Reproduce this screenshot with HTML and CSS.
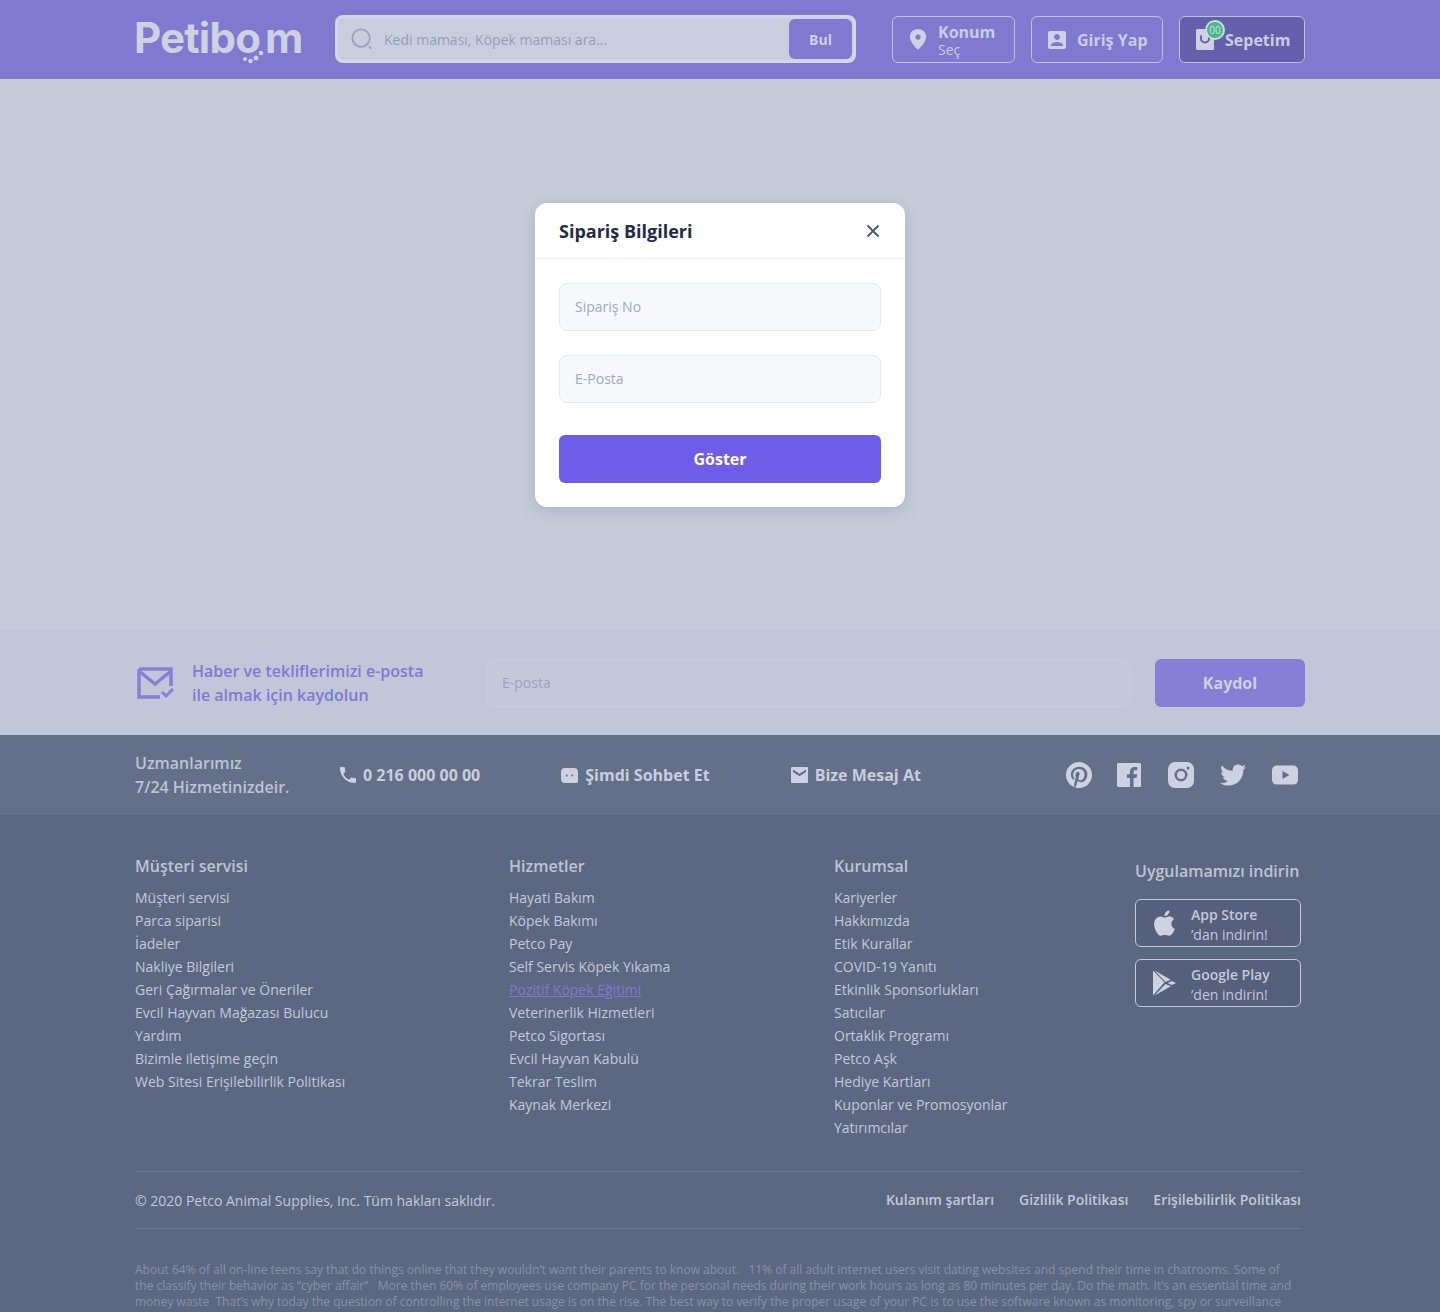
FILE: index.html
```html
<!DOCTYPE html>
<html lang="tr">
<head>
    <meta charset="UTF-8">
    <meta name="viewport" content="width=device-width, initial-scale=1.0">
    <title>Petibom - Sipariş Bilgileri</title>
    <link rel="stylesheet" href="styles.css">
</head>
<body>
    <header class="header">
        <div class="container header-row">
            <a class="logo" href="#">Petib<span class="logo-o">o<svg class="logo-paw" viewBox="0 0 24 14"><circle cx="3" cy="9" r="2"/><circle cx="8.500" cy="11" r="2.300"/><circle cx="14" cy="8" r="2.500"/><circle cx="19" cy="3" r="2.300"/></svg></span><span class="logo-m">m</span></a>
            <form class="search">
                <svg class="search-icon" viewBox="0 0 24 24"><circle cx="11" cy="11" r="9.500"/><path d="M19.500 20l2.500 2.500"/></svg>
                <input class="search-input" type="text" placeholder="Kedi maması, Köpek maması ara...">
                <button class="search-btn" type="button">Bul</button>
            </form>
            <a class="head-btn head-konum" href="#">
                <svg viewBox="4 2 16 20.500"><path d="M12 2C7.600 2 4 5.500 4 9.900 4 15 12 22.500 12 22.500S20 15 20 9.900C20 5.500 16.400 2 12 2zm0 10.400a2.500 2.500 0 1 1 0-5 2.500 2.500 0 0 1 0 5z"/></svg>
                <span class="konum-text"><b>Konum</b><small>Seç</small></span>
            </a>
            <a class="head-btn head-login" href="#">
                <svg viewBox="3 3 18 18"><path d="M3 5v14c0 1.100.89 2 2 2h14c1.100 0 2-.9 2-2V5c0-1.100-.9-2-2-2H5c-1.110 0-2 .9-2 2zm12 4c0 1.660-1.340 3-3 3s-3-1.340-3-3 1.340-3 3-3 3 1.340 3 3zm-9 8c0-2 4-3.100 6-3.100s6 1.100 6 3.100v1H6v-1z"/></svg>
                <b>Giriş Yap</b>
            </a>
            <a class="head-btn head-cart" href="#">
                <span class="cart-icon">
                    <svg viewBox="0 0 18 21"><path fill-rule="evenodd" d="M1.500 0h15A1.500 1.500 0 0 1 18 1.500v18a1.500 1.500 0 0 1-1.500 1.500h-15A1.500 1.500 0 0 1 0 19.500v-18A1.500 1.500 0 0 1 1.500 0zM4 6.500v3a5 5 0 0 0 10 0v-3h-2v3a3 3 0 0 1-6 0v-3z"/></svg>
                    <span class="cart-badge">00</span>
                </span>
                <b>Sepetim</b>
            </a>
        </div>
    </header>

    <main class="main">
        <div class="modal">
            <div class="modal-head">
                <h2>Sipariş Bilgileri</h2>
                <svg class="modal-close" viewBox="0 0 14 14"><path d="M1.500 1.500l11 11M12.500 1.500l-11 11"/></svg>
            </div>
            <form class="modal-body">
                <input class="modal-input" type="text" placeholder="Sipariş No">
                <input class="modal-input" type="text" placeholder="E-Posta">
                <button class="modal-btn" type="button">Göster</button>
            </form>
        </div>
    </main>

    <section class="newsletter">
        <div class="container newsletter-row">
            <svg class="news-icon" viewBox="0 0 38 34"><path d="M2 2h32v17M2 2v28h21M2 4l16 13L34 4" fill="none"/><path class="news-check" d="M25 25l4 4 7-7" fill="none"/></svg>
            <p class="news-text">Haber ve tekliflerimizi e-posta<br>ile almak için kaydolun</p>
            <input class="news-input" type="text" placeholder="E-posta">
            <button class="news-btn" type="button">Kaydol</button>
        </div>
    </section>

    <section class="contact">
        <div class="container contact-row">
            <p class="contact-text">Uzmanlarımız<br>7/24 Hizmetinizdeir.</p>
            <a class="contact-item contact-phone" href="#">
                <svg class="icon-phone" viewBox="3 3 18 18"><path d="M6.620 10.790c1.440 2.830 3.760 5.140 6.590 6.590l2.200-2.200c.27-.27.67-.36 1.020-.24 1.120.37 2.330.57 3.570.57.55 0 1 .45 1 1V20c0 .55-.45 1-1 1-9.390 0-17-7.610-17-17 0-.55.45-1 1-1h3.500c.55 0 1 .45 1 1 0 1.250.2 2.450.57 3.570.11.35.03.74-.25 1.020l-2.200 2.200z"/></svg>
                0 216 000 00 00
            </a>
            <a class="contact-item" href="#">
                <svg class="icon-chat" viewBox="0 0 17 15"><path fill-rule="evenodd" d="M4 0h9a4 4 0 0 1 4 4v9.500a1.500 1.500 0 0 1-1.500 1.500H4a4 4 0 0 1-4-4V4a4 4 0 0 1 4-4zm1.800 6.500a1 1 0 1 0 0 2 1 1 0 0 0 0-2zm5.400 0a1 1 0 1 0 0 2 1 1 0 0 0 0-2z"/></svg>
                Şimdi Sohbet Et
            </a>
            <a class="contact-item" href="#">
                <svg class="icon-mail" viewBox="0 0 17 16"><path fill-rule="evenodd" d="M1 0h15a1 1 0 0 1 1 1v14a1 1 0 0 1-1 1H1a1 1 0 0 1-1-1V1a1 1 0 0 1 1-1zm1 2.500V5l6.500 4.200L15 5V2.500L8.500 6.700z"/></svg>
                Bize Mesaj At
            </a>
            <div class="social">
                <svg viewBox="2 2 20 20"><path d="M9.040 21.540C10 21.830 10.970 22 12 22A10 10 0 0 0 22 12 10 10 0 0 0 12 2 10 10 0 0 0 2 12c0 4.250 2.670 7.900 6.440 9.340-.09-.78-.18-2.070 0-2.960l1.150-4.940s-.29-.58-.29-1.500c0-1.380.86-2.410 1.840-2.410.86 0 1.260.63 1.260 1.440 0 .86-.57 2.090-.86 3.270-.17.98.52 1.840 1.520 1.840 1.780 0 3.160-1.900 3.160-4.580 0-2.400-1.720-4.040-4.190-4.040-2.820 0-4.480 2.100-4.480 4.310 0 .86.28 1.730.74 2.300.09.06.09.14.06.29l-.29 1.090c0 .17-.11.23-.28.11C6.500 15 5.760 13.180 5.760 11.710c0-3.160 2.240-6.030 6.560-6.030 3.440 0 6.120 2.470 6.120 5.750 0 3.440-2.130 6.200-5.180 6.200-.97 0-1.920-.52-2.260-1.130l-.67 2.370c-.23.86-.86 2.010-1.290 2.700v-.03z"/></svg>
                <svg class="social-fb" viewBox="3 3 18 18"><path d="M4 3h16a1 1 0 0 1 1 1v16a1 1 0 0 1-1 1h-4.600v-6.800h2.300l.4-2.700h-2.700V9.800c0-.8.3-1.300 1.400-1.300h1.400V6.100c-.3 0-1.100-.1-2-.1-2.100 0-3.500 1.300-3.500 3.600v1.900H10.400v2.700h2.300V21H4a1 1 0 0 1-1-1V4a1 1 0 0 1 1-1z"/></svg>
                <svg viewBox="0 0 26 26"><path fill-rule="evenodd" d="M7 0h12a7 7 0 0 1 7 7v12a7 7 0 0 1-7 7H7a7 7 0 0 1-7-7V7a7 7 0 0 1 7-7zm6 6.500a6.500 6.500 0 1 0 0 13 6.500 6.500 0 0 0 0-13zm0 2.500a4 4 0 1 1 0 8 4 4 0 0 1 0-8zm7-4.500a1.500 1.500 0 1 0 0 3 1.500 1.500 0 0 0 0-3z"/></svg>
                <svg viewBox="1.500 4 21 17"><path d="M22.460 6c-.77.35-1.600.58-2.460.69.88-.53 1.560-1.370 1.880-2.380-.83.5-1.750.85-2.720 1.050C18.370 4.500 17.260 4 16 4c-2.350 0-4.270 1.920-4.270 4.290 0 .34.04.67.11.98C8.280 9.090 5.110 7.380 3 4.790c-.37.63-.58 1.370-.58 2.150 0 1.490.75 2.810 1.910 3.560-.71 0-1.370-.2-1.950-.5v.03c0 2.080 1.480 3.820 3.440 4.210-.36.1-.74.15-1.130.15-.27 0-.54-.03-.8-.08.54 1.690 2.110 2.950 4 2.980-1.460 1.160-3.310 1.840-5.330 1.840-.34 0-.68-.02-1.020-.06C3.440 20.290 5.700 21 8.120 21 16 21 20.330 14.460 20.330 8.790c0-.19 0-.37-.01-.56.84-.6 1.560-1.360 2.140-2.230z"/></svg>
                <svg viewBox="0 0 26 26"><path fill-rule="evenodd" d="M5 3.500h16a5 5 0 0 1 5 4.500c.2 3 .2 7 0 10a5 5 0 0 1-5 4.500H5A5 5 0 0 1 0 18c-.2-3-.2-7 0-10a5 5 0 0 1 5-4.500zM10.500 9v8l7-4z"/></svg>
            </div>
        </div>
    </section>

    <footer class="footer">
        <div class="container">
            <div class="footer-cols">
                <div class="footer-col">
                    <h3>Müşteri servisi</h3>
                    <a href="#">Müşteri servisi</a>
                    <a href="#">Parca siparisi</a>
                    <a href="#">İadeler</a>
                    <a href="#">Nakliye Bilgileri</a>
                    <a href="#">Geri Çağırmalar ve Öneriler</a>
                    <a href="#">Evcil Hayvan Mağazası Bulucu</a>
                    <a href="#">Yardım</a>
                    <a href="#">Bizimle iletişime geçin</a>
                    <a href="#">Web Sitesi Erişilebilirlik Politikası</a>
                </div>
                <div class="footer-col">
                    <h3>Hizmetler</h3>
                    <a href="#">Hayati Bakım</a>
                    <a href="#">Köpek Bakımı</a>
                    <a href="#">Petco Pay</a>
                    <a href="#">Self Servis Köpek Yıkama</a>
                    <a class="active" href="#">Pozitif Köpek Eğitimi</a>
                    <a href="#">Veterinerlik Hizmetleri</a>
                    <a href="#">Petco Sigortası</a>
                    <a href="#">Evcil Hayvan Kabulü</a>
                    <a href="#">Tekrar Teslim</a>
                    <a href="#">Kaynak Merkezi</a>
                </div>
                <div class="footer-col">
                    <h3>Kurumsal</h3>
                    <a href="#">Kariyerler</a>
                    <a href="#">Hakkımızda</a>
                    <a href="#">Etik Kurallar</a>
                    <a href="#">COVID-19 Yanıtı</a>
                    <a href="#">Etkinlik Sponsorlukları</a>
                    <a href="#">Satıcılar</a>
                    <a href="#">Ortaklık Programı</a>
                    <a href="#">Petco Aşk</a>
                    <a href="#">Hediye Kartları</a>
                    <a href="#">Kuponlar ve Promosyonlar</a>
                    <a href="#">Yatırımcılar</a>
                </div>
                <div class="footer-app">
                    <h3>Uygulamamızı indirin</h3>
                    <a class="app-btn" href="#">
                        <svg viewBox="3 2 18 20"><path d="M18.710 19.500c-.83 1.240-1.710 2.450-3.050 2.470-1.340.03-1.770-.79-3.290-.79-1.530 0-2 .77-3.270.82-1.310.05-2.300-1.320-3.140-2.530C4.250 17 2.940 12.450 4.700 9.390c.87-1.520 2.430-2.480 4.120-2.510 1.280-.02 2.500.87 3.290.87.78 0 2.260-1.070 3.810-.91.65.03 2.470.26 3.640 1.980-.09.06-2.170 1.280-2.150 3.810.03 3.020 2.650 4.030 2.680 4.040-.03.07-.42 1.440-1.380 2.830M13 3.500c.73-.83 1.940-1.460 2.940-1.500.13 1.170-.34 2.350-1.040 3.190-.69.85-1.830 1.510-2.950 1.420-.15-1.150.41-2.350 1.050-3.110z"/></svg>
                        <span class="app-text"><b>App Store</b>’dan indirin!</span>
                    </a>
                    <a class="app-btn" href="#">
                        <svg viewBox="0 0 22 24"><path d="M0 0l11 11.300L0 24zM1.500 0L17 9 12 11zM1.500 24L17 15l-5-2zM18 10l4 2-4 2-4-2z"/></svg>
                        <span class="app-text"><b>Google Play</b>’den indirin!</span>
                    </a>
                </div>
            </div>
            <div class="footer-bottom">
                <p>© 2020 Petco Animal Supplies, Inc. Tüm hakları saklıdır.</p>
                <nav class="bottom-links">
                    <a href="#">Kulanım şartları</a>
                    <a href="#">Gizlilik Politikası</a>
                    <a href="#">Erişilebilirlik Politikası</a>
                </nav>
            </div>
            <p class="legal">About 64% of all on-line teens say that do things online that they wouldn’t want their parents to know about. &nbsp; 11% of all adult internet users visit dating websites and spend their time in chatrooms. Some of the classify their behavior as “cyber affair” &nbsp; More then 60% of employees use company PC for the personal needs during their work hours as long as 80 minutes per day. Do the math. It’s an essential time and money waste &nbsp;That’s why today the question of controlling the internet usage is on the rise. The best way to verify the proper usage of your PC is to use the software known as monitoring, spy or surveillance</p>
        </div>
    </footer>
</body>
</html>
```

FILE: styles.css
```css
* {
    margin: 0;
    padding: 0;
    box-sizing: border-box;
}

body {
    font-family: 'Open Sans', sans-serif;
    background: #c5cbd9;
    color: #c9cede;
}

a {
    color: inherit;
    text-decoration: none;
}

input,
button {
    font-family: inherit;
    outline: none;
}

.container {
    width: 1170px;
    margin: 0 auto;
}

/* header */
.header {
    background: #7f79d0;
    height: 79px;
    padding-top: 15px;
}

.header-row {
    display: flex;
    align-items: flex-start;
}

.logo {
    width: 200px;
    font-family: 'Inter', sans-serif;
    font-size: 42px;
    font-weight: 700;
    line-height: 46px;
    letter-spacing: -0.8px;
    color: #cdd1e2;
    text-indent: -1px;
}

.logo-o {
    position: relative;
}

.logo-m {
    margin-left: 5px;
}

.logo-paw {
    position: absolute;
    left: 7px;
    bottom: -1px;
    width: 24px;
    height: 14px;
    fill: #cdd1e2;
}

.search {
    width: 521px;
    height: 48px;
    display: flex;
    align-items: center;
    background: #c9cede;
    border: 3px solid #d2d6e5;
    border-radius: 8px;
    padding: 0 1px 0 13px;
}

.search-icon {
    width: 22px;
    height: 22px;
    fill: none;
    stroke: #9aa2b9;
    stroke-width: 2;
    flex-shrink: 0;
}

.search-input {
    flex: 1;
    margin-left: 11px;
    border: none;
    background: transparent;
    font-size: 14px;
    color: #8d95ad;
}

.search-input::placeholder {
    color: #959db5;
    opacity: 1;
}

.search-btn {
    width: 63px;
    height: 40px;
    border: none;
    border-radius: 6px;
    background: #7f79d0;
    color: #cdd1e2;
    font-size: 14px;
    font-weight: 700;
}

.head-btn {
    height: 47px;
    margin-top: 1px;
    display: flex;
    align-items: center;
    border: 1px solid #bfc2df;
    border-radius: 6px;
    color: #c9cde2;
    font-size: 16px;
}

.head-btn svg {
    fill: #cdd1e2;
    flex-shrink: 0;
}

.head-konum {
    width: 123px;
    margin-left: 36px;
    padding-left: 16px;
}

.head-konum svg {
    width: 18px;
    height: 21px;
}

.konum-text {
    margin-left: 11px;
    padding-top: 2px;
    display: flex;
    flex-direction: column;
    line-height: 18px;
}

.konum-text small {
    font-size: 14px;
    line-height: 18px;
}

.head-login {
    width: 132px;
    margin-left: 16px;
    padding-left: 16px;
}

.head-login svg {
    width: 18px;
    height: 18px;
    margin-right: 11px;
}

.head-cart {
    width: 126px;
    margin-left: 16px;
    padding-left: 16px;
    background: #6560ac;
}

.cart-icon {
    position: relative;
    width: 18px;
    height: 21px;
    margin-right: 11px;
}

.cart-icon svg {
    display: block;
    width: 18px;
    height: 21px;
}

.cart-badge {
    position: absolute;
    left: 9px;
    top: -9px;
    width: 20px;
    height: 20px;
    border: 2px solid #c3e2d8;
    border-radius: 50%;
    background: #4fb48d;
    color: #c9e9db;
    font-size: 10px;
    line-height: 16px;
    text-align: center;
}

/* modal */
.main {
    height: 551px;
    display: flex;
    align-items: center;
    justify-content: center;
}

.modal {
    width: 370px;
    height: 304px;
    background: #fff;
    border-radius: 12px;
    box-shadow: 0 4px 16px rgba(70, 80, 120, 0.2);
}

.modal-head {
    height: 56px;
    padding: 2px 24px 0;
    display: flex;
    align-items: center;
    justify-content: space-between;
    border-bottom: 1px solid #eceef6;
}

.modal-head h2 {
    font-size: 18px;
    font-weight: 700;
    color: #232b4a;
}

.modal-close {
    width: 14px;
    height: 14px;
    margin-right: 1px;
    fill: none;
    stroke: #4d5762;
    stroke-width: 1.8;
}

.modal-body {
    padding: 24px;
    display: flex;
    flex-direction: column;
    gap: 24px;
}

.modal-input {
    height: 48px;
    padding: 0 15px;
    background: #f7f8fc;
    border: 1px solid #e5e8f3;
    border-radius: 8px;
    font-size: 14px;
}

.modal-input::placeholder {
    color: #a0a8bf;
    opacity: 1;
}

.modal-btn {
    height: 48px;
    margin-top: 8px;
    border: none;
    border-radius: 6px;
    background: #6f5ce8;
    color: #fff;
    font-size: 16px;
    font-weight: 700;
}

/* newsletter */
.newsletter {
    background: #c1c7d8;
    height: 105px;
    padding-top: 29px;
}

.newsletter-row {
    display: flex;
    align-items: center;
}

.news-icon {
    width: 38px;
    height: 34px;
    margin: 2px 0 0 2px;
    flex-shrink: 0;
    stroke: #8580d6;
    stroke-width: 3.5;
}

.news-check {
    stroke-width: 3;
}

.news-text {
    width: 294px;
    margin-left: 17px;
    font-size: 16px;
    font-weight: 600;
    line-height: 24px;
    color: #7f79d4;
}

.news-input {
    width: 645px;
    height: 48px;
    padding: 0 15px 2px;
    background: #c4c9da;
    border: 1px solid #c8cddd;
    border-radius: 8px;
    font-size: 14px;
}

.news-input::placeholder {
    color: #9aa1bb;
    opacity: 1;
}

.news-btn {
    width: 150px;
    height: 48px;
    margin-left: 24px;
    border: none;
    border-radius: 6px;
    background: #8580d6;
    color: #cdd1e2;
    font-size: 16px;
    font-weight: 700;
}

/* contact */
.contact {
    background: #646f89;
    height: 80px;
}

.contact-row {
    height: 80px;
    display: flex;
    align-items: center;
}

.contact-text {
    width: 154px;
    font-size: 16px;
    font-weight: 600;
    line-height: 24px;
    white-space: nowrap;
    color: #bec3d5;
}

.contact-item {
    margin-left: 81px;
    display: flex;
    align-items: center;
    gap: 7px;
    font-size: 16px;
    font-weight: 700;
    white-space: nowrap;
}

.contact-phone {
    margin-left: 51px;
}

.contact-item svg {
    fill: #cdd1e2;
}

.icon-phone {
    width: 16px;
    height: 16px;
}

.icon-chat {
    width: 17px;
    height: 15px;
}

.icon-mail {
    width: 17px;
    height: 16px;
}

.social {
    margin-left: auto;
    margin-right: 7px;
    display: flex;
    align-items: center;
    gap: 26px;
}

.social svg {
    width: 26px;
    height: 26px;
    fill: #cdd1e2;
}

.social .social-fb {
    width: 24px;
    height: 24px;
    margin: 0 1px 0 -1px;
}

/* footer */
.footer {
    background: #5c6782;
    height: 497px;
    padding-top: 39px;
    overflow: hidden;
}

.footer-cols {
    display: grid;
    grid-template-columns: 374px 325px 301px 166px;
    height: 317px;
}

.footer-col h3,
.footer-app h3 {
    font-size: 16px;
    font-weight: 600;
    line-height: 24px;
    margin-bottom: 8px;
    white-space: nowrap;
    color: #bec3d5;
}

.footer-col a {
    display: block;
    font-size: 14px;
    line-height: 23px;
    color: #c3c8da;
}

.footer-col a.active {
    color: #7f79d4;
    text-decoration: underline;
}

.footer-app {
    padding-top: 5px;
}

.footer-app h3 {
    margin-bottom: 16px;
}

.app-btn {
    height: 48px;
    margin-bottom: 12px;
    display: flex;
    align-items: center;
    background: #565f7c;
    border: 1px solid #c3c8da;
    border-radius: 6px;
    padding-left: 17px;
}

.app-btn svg {
    width: 23px;
    height: 26px;
    fill: #cdd1e2;
    flex-shrink: 0;
}

.app-text {
    margin-left: 15px;
    padding-top: 4px;
    font-size: 14px;
    line-height: 20px;
    color: #c3c8da;
}

.app-text b {
    display: block;
    font-weight: 600;
}

.footer-bottom {
    width: 1166px;
    height: 58px;
    display: flex;
    align-items: center;
    justify-content: space-between;
    border-top: 1px solid #6f7993;
    border-bottom: 1px solid #6f7993;
    font-size: 14px;
    color: #c3c8da;
}

.bottom-links {
    display: flex;
    gap: 25px;
    font-weight: 600;
    margin-top: -2px;
}

.legal {
    width: 1166px;
    margin-top: 33px;
    font-size: 12px;
    line-height: 16px;
    color: #8a92a9;
}
```
